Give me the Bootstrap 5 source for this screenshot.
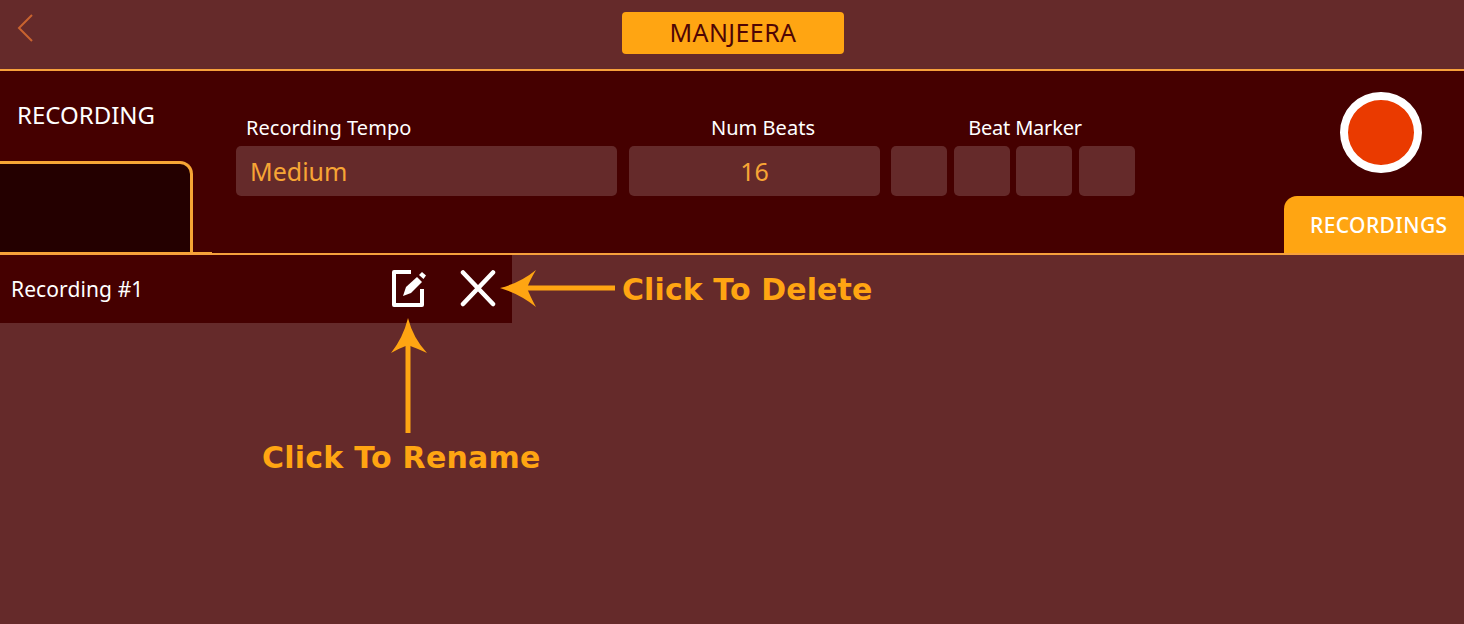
<!DOCTYPE html>
<html lang="en">
  <head>
    <meta charset="UTF-8" />
    <meta name="viewport" content="width=device-width, initial-scale=1.0" />
    <title>Manjeera</title>
    <link
      rel="stylesheet"
      href="https://cdn.jsdelivr.net/npm/bootstrap@5.3.0/dist/css/bootstrap.min.css"
    />
    <style>
      html,
      body {
        height: 624px;
        overflow: hidden;
      }
      body {
        background-color: #652a2a;
        font-family: "Noto Sans", sans-serif;
        position: relative;
      }
      .top-bar {
        height: 71px;
        border-bottom: 2px solid #f7a03c;
        padding-top: 12px;
      }
      .back-link {
        position: absolute;
        left: 17px;
        top: 13px;
        line-height: 0;
      }
      .title-pill {
        width: 222px;
        height: 42px;
        margin-left: 2px;
        background-color: #ffa512;
        color: #4f0505;
        border-radius: 4px;
        font-size: 25px;
        letter-spacing: 0.4px;
      }
      .rec-panel {
        height: 184px;
        background-color: #450000;
        border-bottom: 2px solid #f7a03c;
      }
      .side-col {
        width: 212px;
        border-bottom: 1px solid #f7a535;
      }
      .side-title {
        color: #fff;
        font-size: 24px;
        padding-left: 17px;
        height: 90px;
        padding-top: 26px;
        line-height: 36px;
      }
      .side-box {
        width: 193px;
        height: 91px;
        background-color: #240000;
        border: 3px solid #f7a535;
        border-left: 0;
        border-bottom: 0;
        border-top-right-radius: 13px;
      }
      .fields {
        padding-left: 24px;
        padding-top: 44px;
        gap: 12px;
      }
      .field-label {
        color: #fff;
        font-size: 20px;
        letter-spacing: 0.05px;
        line-height: 26px;
        height: 31px;
        white-space: nowrap;
      }
      .field-box {
        height: 50px;
        background-color: #652a2a;
        border-radius: 5px;
        color: #f7a535;
        font-size: 25px;
        padding-top: 2px;
      }
      .tempo-col {
        width: 381px;
      }
      .tempo-label {
        padding-left: 10px;
      }
      .tempo-box {
        padding-left: 14px;
      }
      .beats-col {
        width: 251px;
        margin-right: -1px;
      }
      .beats-label {
        padding-left: 17px;
      }
      .marker-col {
        width: 244px;
      }
      .marker-label {
        padding-left: 24px;
        letter-spacing: -0.2px;
      }
      .marker-box {
        width: 56px;
      }
      .record-col {
        width: 180px;
      }
      .record-btn {
        width: 82px;
        height: 82px;
        border-radius: 50%;
        background-color: #ea3a00;
        border: 8px solid #fff;
        margin: 21px 0 23px 14px;
      }
      .rec-tab {
        width: 180px;
        height: 57px;
        background-color: #ffa512;
        color: #fff;
        font-size: 21px;
        font-weight: 500;
        letter-spacing: 0.4px;
        border-top-left-radius: 13px;
        border-top-right-radius: 2px;
        padding-left: 26px;
        padding-top: 2px;
      }
      .rec-row {
        width: 512px;
        height: 68px;
        background-color: #450000;
        color: #fff;
        font-size: 21px;
        letter-spacing: 0.1px;
        padding-left: 11px;
      }
      .rec-name {
        width: 379px;
        padding-top: 2px;
      }
      .row-icon {
        display: block;
      }
      .row-icon + .row-icon {
        margin-left: 32px;
      }
      .note-layer {
        position: absolute;
        left: 0;
        top: 0;
        pointer-events: none;
      }
      .note-text {
        position: absolute;
        color: #ffa512;
        font-family: "DejaVu Sans", sans-serif;
        font-weight: 700;
        font-size: 30px;
        letter-spacing: 0.1px;
        line-height: 34px;
        white-space: nowrap;
      }
      .note-delete {
        left: 622px;
        top: 273px;
      }
      .note-rename {
        left: 262px;
        top: 441px;
        letter-spacing: 0.25px;
      }
    </style>
  </head>
  <body>
    <div class="top-bar d-flex justify-content-center align-items-start">
      <a class="back-link" href="#" aria-label="Back">
        <svg width="18" height="30" viewBox="0 0 18 30" fill="none">
          <path d="M15 2 2 15l13 13" stroke="#c9632f" stroke-width="2" />
        </svg>
      </a>
      <div class="title-pill d-flex justify-content-center align-items-center">
        MANJEERA
      </div>
    </div>

    <div class="rec-panel d-flex">
      <div class="side-col">
        <div class="side-title">RECORDING</div>
        <div class="side-box"></div>
      </div>
      <div class="fields d-flex flex-grow-1">
        <div class="tempo-col">
          <div class="field-label tempo-label">Recording Tempo</div>
          <div class="field-box tempo-box d-flex align-items-center">Medium</div>
        </div>
        <div class="beats-col">
          <div class="field-label beats-label text-center">Num Beats</div>
          <div class="field-box d-flex align-items-center justify-content-center">16</div>
        </div>
        <div class="marker-col">
          <div class="field-label marker-label text-center">Beat Marker</div>
          <div class="d-flex justify-content-between">
            <div class="field-box marker-box"></div>
            <div class="field-box marker-box"></div>
            <div class="field-box marker-box"></div>
            <div class="field-box marker-box"></div>
          </div>
        </div>
      </div>
      <div class="record-col d-flex flex-column align-items-center">
        <div class="record-btn"></div>
        <div class="rec-tab d-flex align-items-center">RECORDINGS</div>
      </div>
    </div>

    <div class="rec-row d-flex align-items-center">
      <div class="rec-name">Recording #1</div>
      <svg class="row-icon" width="38" height="38" viewBox="0 0 38 38" fill="none">
        <path d="M21 2H4V35H32V19" stroke="#fff" stroke-width="4" stroke-linejoin="round" />
        <path d="M13 26 16 17 27 7 32 12 21 23z" fill="#fff" />
        <path d="M29 5 32 2 36 5.500 33.500 9z" fill="#fff" />
      </svg>
      <svg class="row-icon" width="36" height="38" viewBox="0 0 36 38" fill="none">
        <path d="M3 2.500 33 34M33 2.500 3 34" stroke="#fff" stroke-width="4.500" stroke-linecap="round" />
      </svg>
    </div>

    <svg class="note-layer" width="1464" height="624" viewBox="0 0 1464 624" fill="none">
      <path d="M527 288H615" stroke="#ffa512" stroke-width="5" />
      <path d="M500 288Q520 283 536 270 530 280 527 288 530 296 536 307 520 294 500 288z" fill="#ffa512" />
      <path d="M408 344V433" stroke="#ffa512" stroke-width="5" />
      <path d="M408 318Q413 338 427 353 416 348 408 345 400 348 391 353 403 338 408 318z" fill="#ffa512" />
    </svg>
    <div class="note-text note-delete">Click To Delete</div>
    <div class="note-text note-rename">Click To Rename</div>
  </body>
</html>
